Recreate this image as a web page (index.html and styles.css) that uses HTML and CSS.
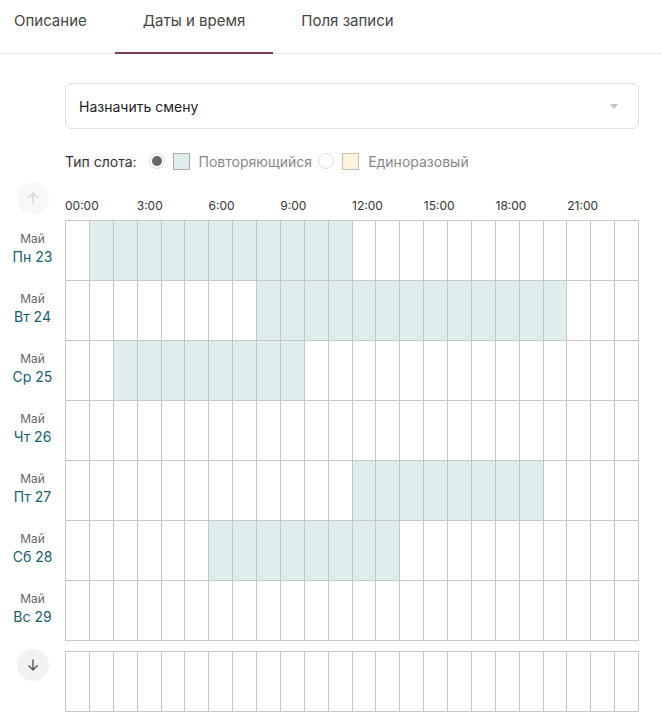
FILE: index.html
```html
<!DOCTYPE html>
<html lang="ru">
<head>
<meta charset="utf-8">
<title>Даты и время</title>
<link rel="stylesheet" href="styles.css">
</head>
<body>
<nav class="tabs">
  <div class="tab first">Описание</div>
  <div class="tab active">Даты и время</div>
  <div class="tab">Поля записи</div>
</nav>
<main class="content">
  <div class="select">
    <span class="select-text">Назначить смену</span>
    <span class="caret"></span>
  </div>
  <div class="legend">
    <span class="legend-title">Тип слота:</span>
    <span class="radio checked"></span>
    <span class="swatch repeat"></span>
    <span class="legend-label">Повторяющийся</span>
    <span class="radio"></span>
    <span class="swatch once"></span>
    <span class="legend-label">Единоразовый</span>
  </div>

  <div class="head">
    <div class="side">
      <button class="nav-btn up" aria-label="Вверх">
        <svg width="14" height="14" viewBox="0 0 14 14"><path d="M7 12V2M2.8 6.2L7 2l4.2 4.2" fill="none" stroke="currentColor" stroke-width="1.4" stroke-linecap="round" stroke-linejoin="round"/></svg>
      </button>
    </div>
    <div class="times">
      <span>00:00</span><span>3:00</span><span>6:00</span><span>9:00</span><span>12:00</span><span>15:00</span><span>18:00</span><span>21:00</span>
    </div>
  </div>

  <div class="week">
    <div class="days">
      <div class="day"><span class="month">Май</span><span class="date">Пн 23</span></div>
      <div class="day"><span class="month">Май</span><span class="date">Вт 24</span></div>
      <div class="day"><span class="month">Май</span><span class="date">Ср 25</span></div>
      <div class="day"><span class="month">Май</span><span class="date">Чт 26</span></div>
      <div class="day"><span class="month">Май</span><span class="date">Пт 27</span></div>
      <div class="day"><span class="month">Май</span><span class="date">Сб 28</span></div>
      <div class="day"><span class="month">Май</span><span class="date">Вс 29</span></div>
    </div>
    <div class="board">
      <!-- Пн 23: 1..11 -->
      <span class="c"></span><span class="c on"></span><span class="c on"></span><span class="c on"></span><span class="c on"></span><span class="c on"></span><span class="c on"></span><span class="c on"></span><span class="c on"></span><span class="c on"></span><span class="c on"></span><span class="c on"></span><span class="c"></span><span class="c"></span><span class="c"></span><span class="c"></span><span class="c"></span><span class="c"></span><span class="c"></span><span class="c"></span><span class="c"></span><span class="c"></span><span class="c"></span><span class="c"></span>
      <!-- Вт 24: 8..20 -->
      <span class="c"></span><span class="c"></span><span class="c"></span><span class="c"></span><span class="c"></span><span class="c"></span><span class="c"></span><span class="c"></span><span class="c on"></span><span class="c on"></span><span class="c on"></span><span class="c on"></span><span class="c on"></span><span class="c on"></span><span class="c on"></span><span class="c on"></span><span class="c on"></span><span class="c on"></span><span class="c on"></span><span class="c on"></span><span class="c on"></span><span class="c"></span><span class="c"></span><span class="c"></span>
      <!-- Ср 25: 2..9 -->
      <span class="c"></span><span class="c"></span><span class="c on"></span><span class="c on"></span><span class="c on"></span><span class="c on"></span><span class="c on"></span><span class="c on"></span><span class="c on"></span><span class="c on"></span><span class="c"></span><span class="c"></span><span class="c"></span><span class="c"></span><span class="c"></span><span class="c"></span><span class="c"></span><span class="c"></span><span class="c"></span><span class="c"></span><span class="c"></span><span class="c"></span><span class="c"></span><span class="c"></span>
      <!-- Чт 26 -->
      <span class="c"></span><span class="c"></span><span class="c"></span><span class="c"></span><span class="c"></span><span class="c"></span><span class="c"></span><span class="c"></span><span class="c"></span><span class="c"></span><span class="c"></span><span class="c"></span><span class="c"></span><span class="c"></span><span class="c"></span><span class="c"></span><span class="c"></span><span class="c"></span><span class="c"></span><span class="c"></span><span class="c"></span><span class="c"></span><span class="c"></span><span class="c"></span>
      <!-- Пт 27: 12..19 -->
      <span class="c"></span><span class="c"></span><span class="c"></span><span class="c"></span><span class="c"></span><span class="c"></span><span class="c"></span><span class="c"></span><span class="c"></span><span class="c"></span><span class="c"></span><span class="c"></span><span class="c on"></span><span class="c on"></span><span class="c on"></span><span class="c on"></span><span class="c on"></span><span class="c on"></span><span class="c on"></span><span class="c on"></span><span class="c"></span><span class="c"></span><span class="c"></span><span class="c"></span>
      <!-- Сб 28: 6..13 -->
      <span class="c"></span><span class="c"></span><span class="c"></span><span class="c"></span><span class="c"></span><span class="c"></span><span class="c on"></span><span class="c on"></span><span class="c on"></span><span class="c on"></span><span class="c on"></span><span class="c on"></span><span class="c on"></span><span class="c on"></span><span class="c"></span><span class="c"></span><span class="c"></span><span class="c"></span><span class="c"></span><span class="c"></span><span class="c"></span><span class="c"></span><span class="c"></span><span class="c"></span>
      <!-- Вс 29 -->
      <span class="c"></span><span class="c"></span><span class="c"></span><span class="c"></span><span class="c"></span><span class="c"></span><span class="c"></span><span class="c"></span><span class="c"></span><span class="c"></span><span class="c"></span><span class="c"></span><span class="c"></span><span class="c"></span><span class="c"></span><span class="c"></span><span class="c"></span><span class="c"></span><span class="c"></span><span class="c"></span><span class="c"></span><span class="c"></span><span class="c"></span><span class="c"></span>
    </div>
  </div>

  <div class="week next">
    <div class="side">
      <button class="nav-btn down" aria-label="Вниз">
        <svg width="14" height="14" viewBox="0 0 14 14"><path d="M7 2v10M2.8 7.8L7 12l4.2-4.2" fill="none" stroke="currentColor" stroke-width="1.4" stroke-linecap="round" stroke-linejoin="round"/></svg>
      </button>
    </div>
    <div class="board">
      <span class="c"></span><span class="c"></span><span class="c"></span><span class="c"></span><span class="c"></span><span class="c"></span><span class="c"></span><span class="c"></span><span class="c"></span><span class="c"></span><span class="c"></span><span class="c"></span><span class="c"></span><span class="c"></span><span class="c"></span><span class="c"></span><span class="c"></span><span class="c"></span><span class="c"></span><span class="c"></span><span class="c"></span><span class="c"></span><span class="c"></span><span class="c"></span>
    </div>
  </div>
</main>
</body>
</html>
```

FILE: styles.css
```css
* { box-sizing: border-box; }

html, body {
  margin: 0;
  padding: 0;
  background: #fff;
}

body {
  font-family: Inter, "Noto Sans", sans-serif;
  color: #333;
  width: 662px;
  overflow: hidden;
}

.tabs {
  display: flex;
  height: 54px;
  border-bottom: 1px solid #e8e8e8;
}

.tab {
  padding: 11px 28px 0;
  font-size: 15px;
  line-height: 20px;
  color: #444;
}

.tab.first {
  padding-left: 14px;
}

.tab.active {
  border-bottom: 2px solid #7a3d55;
  margin-bottom: -1px;
}

.content {
  padding: 29px 23px 0 0;
}

.select {
  margin-left: 65px;
  height: 46px;
  border: 1px solid #dedee2;
  border-radius: 6px;
  display: flex;
  align-items: center;
  justify-content: space-between;
  padding: 0 20px 0 13px;
}

.select-text {
  font-size: 14px;
  color: #222;
}

.caret {
  width: 0;
  height: 0;
  border-left: 4px solid transparent;
  border-right: 4px solid transparent;
  border-top: 5px solid #c4c4c4;
}

.legend {
  margin: 22px 0 0 65px;
  height: 20px;
  display: flex;
  align-items: center;
  font-size: 14px;
}

.legend-title {
  color: #333;
  margin-right: 12px;
}

.radio {
  width: 16px;
  height: 16px;
  border: 1px solid #dcdcdc;
  border-radius: 50%;
  display: flex;
  align-items: center;
  justify-content: center;
  margin-right: 8px;
}

.radio.checked::after {
  content: "";
  width: 10px;
  height: 10px;
  border-radius: 50%;
  background: #666;
}

.swatch {
  width: 17px;
  height: 17px;
  border: 1px solid #aaa;
  margin-right: 9px;
}

.swatch.repeat { background: #e0eded; }
.swatch.once { background: #fdf5dd; border-color: #c9c2b0; }

.legend-label {
  color: #888;
  font-size: 14px;
  margin-right: 6px;
}

.head {
  display: flex;
  margin-top: 11px;
  height: 38px;
}

.side {
  width: 65px;
  flex: none;
  display: flex;
  justify-content: center;
  align-items: flex-start;
}

.nav-btn {
  width: 32px;
  height: 32px;
  border-radius: 50%;
  border: none;
  padding: 0;
  display: flex;
  align-items: center;
  justify-content: center;
  background: #f8f8f8;
  color: #d2d6da;
}

.nav-btn.down {
  background: #f2f2f2;
  color: #5b5560;
  margin-top: -2px;
}

.times {
  flex: 1;
  display: grid;
  grid-template-columns: repeat(8, 1fr);
  align-items: end;
  padding-bottom: 6px;
  font-size: 12px;
  line-height: 16px;
  color: #333;
}

.week {
  display: flex;
}

.week.next {
  margin-top: 10px;
}

.days {
  width: 65px;
  flex: none;
  display: flex;
  flex-direction: column;
}

.day {
  height: 60px;
  display: flex;
  flex-direction: column;
  align-items: center;
  justify-content: center;
  gap: 3px;
  padding-bottom: 4px;
}

.month {
  font-size: 12px;
  line-height: 14px;
  color: #666;
}

.date {
  font-size: 14px;
  line-height: 16px;
  color: #165f6c;
}

.board {
  flex: 1;
  display: grid;
  grid-template-columns: repeat(24, 1fr);
  border-top: 1px solid #c6c6c6;
  border-left: 1px solid #c6c6c6;
}

.c {
  height: 60px;
  border-right: 1px solid #c6c6c6;
  border-bottom: 1px solid #c6c6c6;
}

.c.on {
  background: #e0eded;
}
```
